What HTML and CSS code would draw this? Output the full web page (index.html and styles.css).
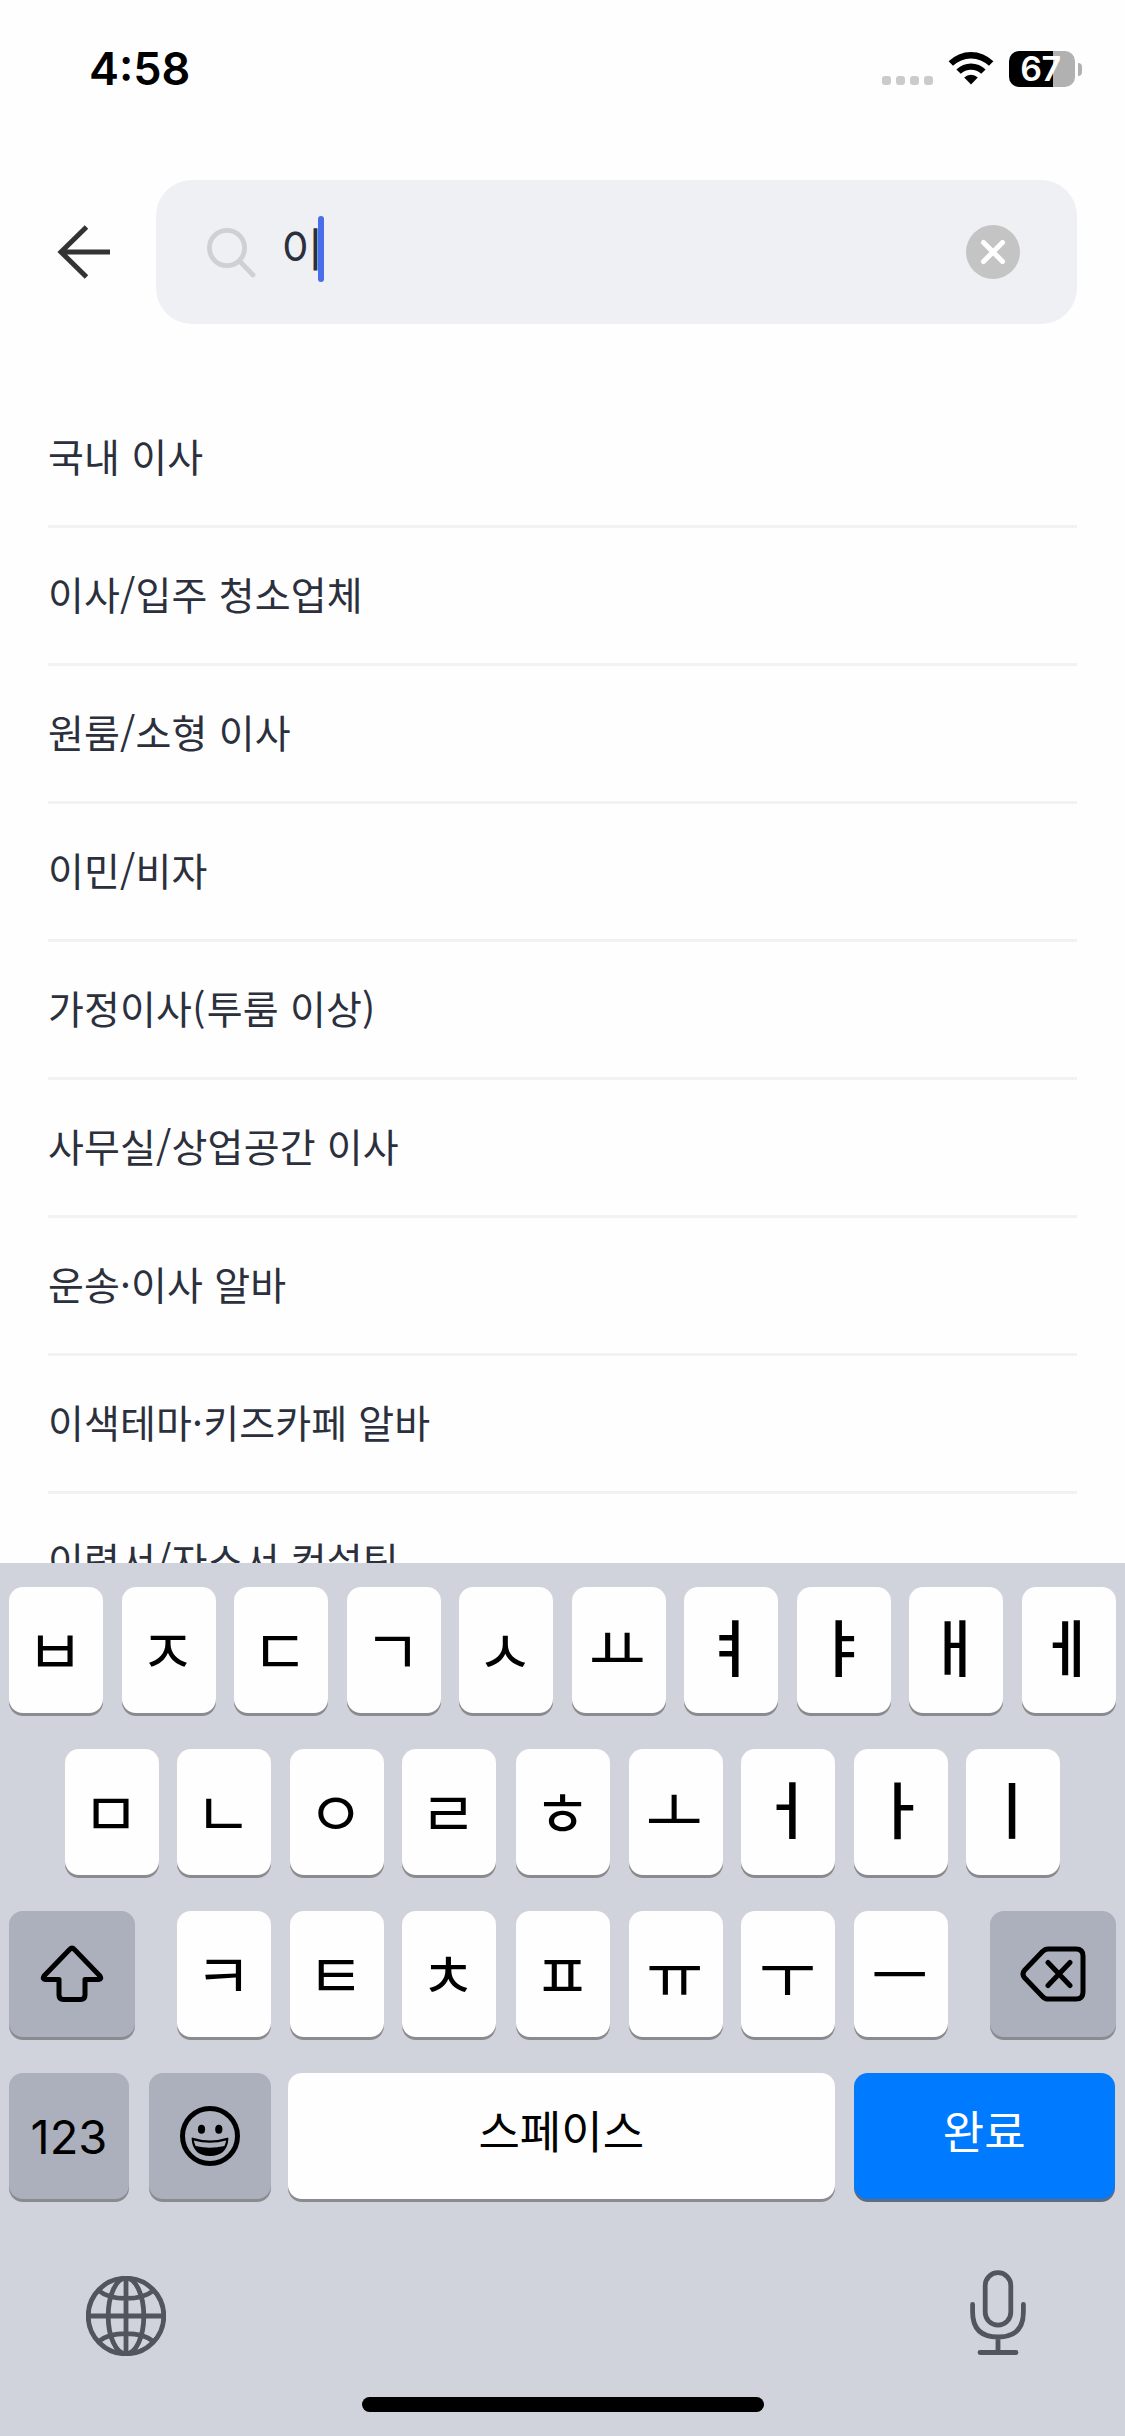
FILE: index.html
```html
<!DOCTYPE html>
<html lang="ko">
<head>
<meta charset="utf-8">
<title>검색</title>
<link rel="stylesheet" href="styles.css">
</head>
<body>
<main class="screen">
  <header class="status">
    <span class="time">4:58</span>
    <div class="indicators">
      <div class="cell"><i></i><i></i><i></i><i></i></div>
      <svg class="wifi" viewBox="0 0 46 34" width="46" height="34">
        <path d="M0.6 10.2A32 32 0 0 1 45.4 10.2L41 14.8A25.8 25.8 0 0 0 5 14.8Z"/>
        <path d="M8.4 18.4A20.8 20.8 0 0 1 37.6 18.4L33.2 22.8A14.6 14.6 0 0 0 12.8 22.8Z"/>
        <path d="M16.2 26.6A9.8 9.8 0 0 1 29.8 26.6L23 33.6Z"/>
      </svg>
      <div class="battery"><span class="level">67</span><i class="nub"></i></div>
    </div>
  </header>
  <div class="searchbar">
    <svg class="back" viewBox="0 0 54 54" width="54" height="54">
      <path d="M53 27H4M29.5 2L4 27L29.5 52"/>
    </svg>
    <div class="field">
      <svg class="lens" viewBox="0 0 50 54" width="50" height="54">
        <circle cx="20" cy="20" r="17.6"/>
        <path d="M33 33.5L46 47"/>
      </svg>
      <span class="query">이</span><i class="caret"></i>
      <svg class="clear" viewBox="0 0 54 54" width="54" height="54">
        <circle cx="27" cy="27" r="27"/>
        <path d="M17.500 17.500L36.500 36.500M36.500 17.500L17.500 36.500"/>
      </svg>
    </div>
  </div>
  <ul class="results">
    <li>국내 이사</li>
    <li>이사/입주 청소업체</li>
    <li>원룸/소형 이사</li>
    <li>이민/비자</li>
    <li>가정이사<span class="paren">(</span>투룸 이상<span class="paren">)</span></li>
    <li>사무실/상업공간 이사</li>
    <li>운송·이사 알바</li>
    <li>이색테마·키즈카페 알바</li>
    <li>이력서/자소서 컨설팅</li>
  </ul>
</main>
<section class="keyboard">
  <div class="row">
    <b class="key">ㅂ</b><b class="key">ㅈ</b><b class="key">ㄷ</b><b class="key">ㄱ</b><b class="key">ㅅ</b><b class="key flat">ㅛ</b><b class="key vowel">ㅕ</b><b class="key vowel">ㅑ</b><b class="key vowel">ㅐ</b><b class="key vowel">ㅔ</b>
  </div>
  <div class="row middle">
    <b class="key">ㅁ</b><b class="key">ㄴ</b><b class="key">ㅇ</b><b class="key split">ㄹ</b><b class="key">ㅎ</b><b class="key flat">ㅗ</b><b class="key vowel">ㅓ</b><b class="key vowel">ㅏ</b><b class="key vowel">ㅣ</b>
  </div>
  <div class="row spread">
    <b class="key dark side">
      <svg class="line" viewBox="0 0 64 58" width="64" height="58">
        <path d="M29.6 4.4Q32 2 34.4 4.4L60 31Q62 34.2 58.5 34.5H45V50Q45 54.5 40.500 54.500H23.500Q19 54.500 19 50V34.500H5.500Q2 34.200 4 31Z"/>
      </svg>
    </b>
    <div class="letters">
      <b class="key">ㅋ</b><b class="key">ㅌ</b><b class="key split">ㅊ</b><b class="key">ㅍ</b><b class="key">ㅠ</b><b class="key">ㅜ</b><b class="key">ㅡ</b>
    </div>
    <b class="key dark side">
      <svg class="line" viewBox="0 0 66 56" width="66" height="56">
        <path d="M28 3H56Q63 3 63 10V46Q63 53 56 53H28Q25 53 22.500 50.400L4.800 32Q1.200 28 4.800 24L22.500 5.600Q25 3 28 3ZM28 16.500L50 39.500M50 16.500L28 39.500"/>
      </svg>
    </b>
  </div>
  <div class="row bottom">
    <b class="key dark num">123</b>
    <b class="key dark emoji">
      <svg viewBox="0 0 60 60" width="60" height="60">
        <circle class="face" cx="30" cy="30" r="27.500"/>
        <ellipse cx="21.500" cy="23.200" rx="3.600" ry="4.500"/>
        <ellipse cx="38.800" cy="23.200" rx="3.600" ry="4.500"/>
        <path class="mouth" d="M12.600 32.600Q30 38.200 47.400 32.600Q46.400 48.600 30 49Q13.600 48.600 12.600 32.600Z"/>
        <path class="teeth" d="M13.800 34.600Q30 39 46.200 34.600Q45.600 37.600 44.400 40Q30 43.600 15.600 40Q14.400 37.600 13.800 34.600Z"/>
      </svg>
    </b>
    <b class="key space">스페이스</b>
    <b class="key done">완료</b>
  </div>
  <div class="tools">
    <svg class="tool globe" viewBox="0 0 80 80" width="80" height="80">
      <circle cx="40" cy="40" r="37.800"/>
      <ellipse cx="40" cy="40" rx="17.800" ry="37.800"/>
      <path d="M40 2V78M2 40H78M12.500 14.500Q22 22.400 40 22.400Q58 22.400 67.500 14.500M12.500 65.500Q22 57.600 40 57.600Q58 57.600 67.500 65.500"/>
    </svg>
    <svg class="tool" viewBox="0 0 58 86" width="58" height="86">
      <rect x="16.200" y="2.700" width="25.600" height="52.400" rx="12.800"/>
      <path d="M3.600 34.500V42Q3.600 67 29 67Q54.400 67 54.400 42V34.500M29 67V82.500M11 82.500H47"/>
    </svg>
  </div>
  <div class="home"></div>
</section>
</body>
</html>
```
FILE: styles.css
```css
* { box-sizing: border-box; }
body {
  margin: 0;
  width: 1125px;
  height: 2436px;
  overflow: hidden;
  background: #fff;
  font-family: "Noto Sans CJK KR", sans-serif;
}
svg { display: block; flex: none; }
.screen { height: 1563px; overflow: hidden; background: #fefefe; }

/* status bar */
.status {
  height: 180px;
  padding: 42px 43px 0 89px;
  display: flex;
  justify-content: space-between;
  align-items: flex-start;
}
.time {
  font: 600 45px/54px Inter, sans-serif;
  color: #000;
}
.indicators { display: flex; padding-top: 9px; }
.cell { display: flex; gap: 5px; padding-top: 25px; margin-right: 15px; }
.cell i { width: 9px; height: 9px; border-radius: 3px; background: #cbcbcb; }
.battery { display: flex; align-items: center; gap: 3px; margin-left: 15px; }
.level {
  width: 66px;
  height: 36px;
  padding-right: 3px;
  border-radius: 10px;
  background: linear-gradient(90deg, #000 44px, #b1b1b1 44px);
  color: #fff;
  font: 600 34px/36px Inter, sans-serif;
  letter-spacing: -0.5px;
  text-align: center;
}
.nub { width: 4px; height: 13px; border-radius: 0 4px 4px 0; background: #b1b1b1; }

/* search bar */
.searchbar {
  display: flex;
  align-items: center;
  padding: 0 48px 0 57px;
  gap: 45px;
}
.back { fill: none; stroke: #333; stroke-width: 5; }
.field {
  flex: 1;
  height: 144px;
  border-radius: 36px;
  background: #eef0f4;
  display: flex;
  align-items: center;
  padding: 0 57px 0 51px;
}
.lens { fill: none; stroke: #cdd0d5; stroke-width: 4.800; stroke-linecap: round; margin-top: 6px; }
.query {
  margin-left: 24px;
  font-size: 46px;
  line-height: 60px;
  margin-top: -12px;
  color: #2b303c;
}
.caret { width: 6px; height: 66px; margin: -6px 0 0 -5px; border-radius: 3px; background: #4a6dea; }
.clear { margin-left: auto; fill: #c4c4c4; }
.clear path { stroke: #fff; stroke-width: 5; stroke-linecap: round; }

/* suggestions */
.results { list-style: none; margin: 0; padding: 66px 48px 0; }
.results li {
  height: 138px;
  border-bottom: 3px solid #f0f2f3;
  font-size: 39px;
  letter-spacing: 0.15px;
  line-height: 130px;
  color: #2b303c;
  white-space: nowrap;
}
.paren { letter-spacing: 1.500px; }

/* keyboard */
.keyboard {
  height: 873px;
  padding: 24px 9px 0;
  background: #d0d3db;
}
.row { display: flex; gap: 18.500px; height: 126px; margin-bottom: 36px; }
.key {
  width: 94px;
  height: 126px;
  flex: none;
  border-radius: 14px;
  background: #fefefe;
  box-shadow: 0 3px 0 #898b8f;
  display: flex;
  justify-content: center;
  align-items: center;
  padding: 0 2px 5px 0;
  font-weight: 400;
  font-size: 62px;
  line-height: 1;
  color: #000;
}
.vowel { font-weight: 500; padding: 0 3px 11px 0; }
.flat { padding: 0 3px 8px 0; }
.split { margin-right: 1.500px; }
.middle { justify-content: center; }
.spread { justify-content: space-between; }
.letters { display: flex; gap: 18.500px; }
.dark { background: #abb0bc; padding: 0; }
.side { width: 126px; }
.line { fill: none; stroke: #000; stroke-width: 5; stroke-linejoin: round; stroke-linecap: round; }
.bottom { gap: 0; }
.num { width: 120px; margin-right: 19.500px; font: 400 47px/1 Inter, sans-serif; }
.emoji { width: 122.500px; margin-right: 17px; }
.space { width: 546.500px; margin-right: 19px; padding: 0 0 13px; font-size: 45px; }
.done { width: 261.500px; padding: 0 0 13px; font-size: 45px; background: #007aff; color: #fff; box-shadow: 0 3px 0 #5f6c80; }
.face { fill: none; stroke: #000; stroke-width: 5; }
.mouth { stroke: #000; stroke-width: 2; stroke-linejoin: round; }
.teeth { fill: #abb0bc; }
.tools {
  display: flex;
  justify-content: space-between;
  align-items: center;
  padding: 0 89px 0 77px;
  height: 86px;
  margin-top: 71px;
}
.tool { fill: none; stroke: #52565c; stroke-width: 4.800; stroke-linecap: round; }
.globe { margin-top: 5px; }
.home { width: 402px; height: 15px; border-radius: 8px; background: #000; margin: 41px auto 0; }
```
